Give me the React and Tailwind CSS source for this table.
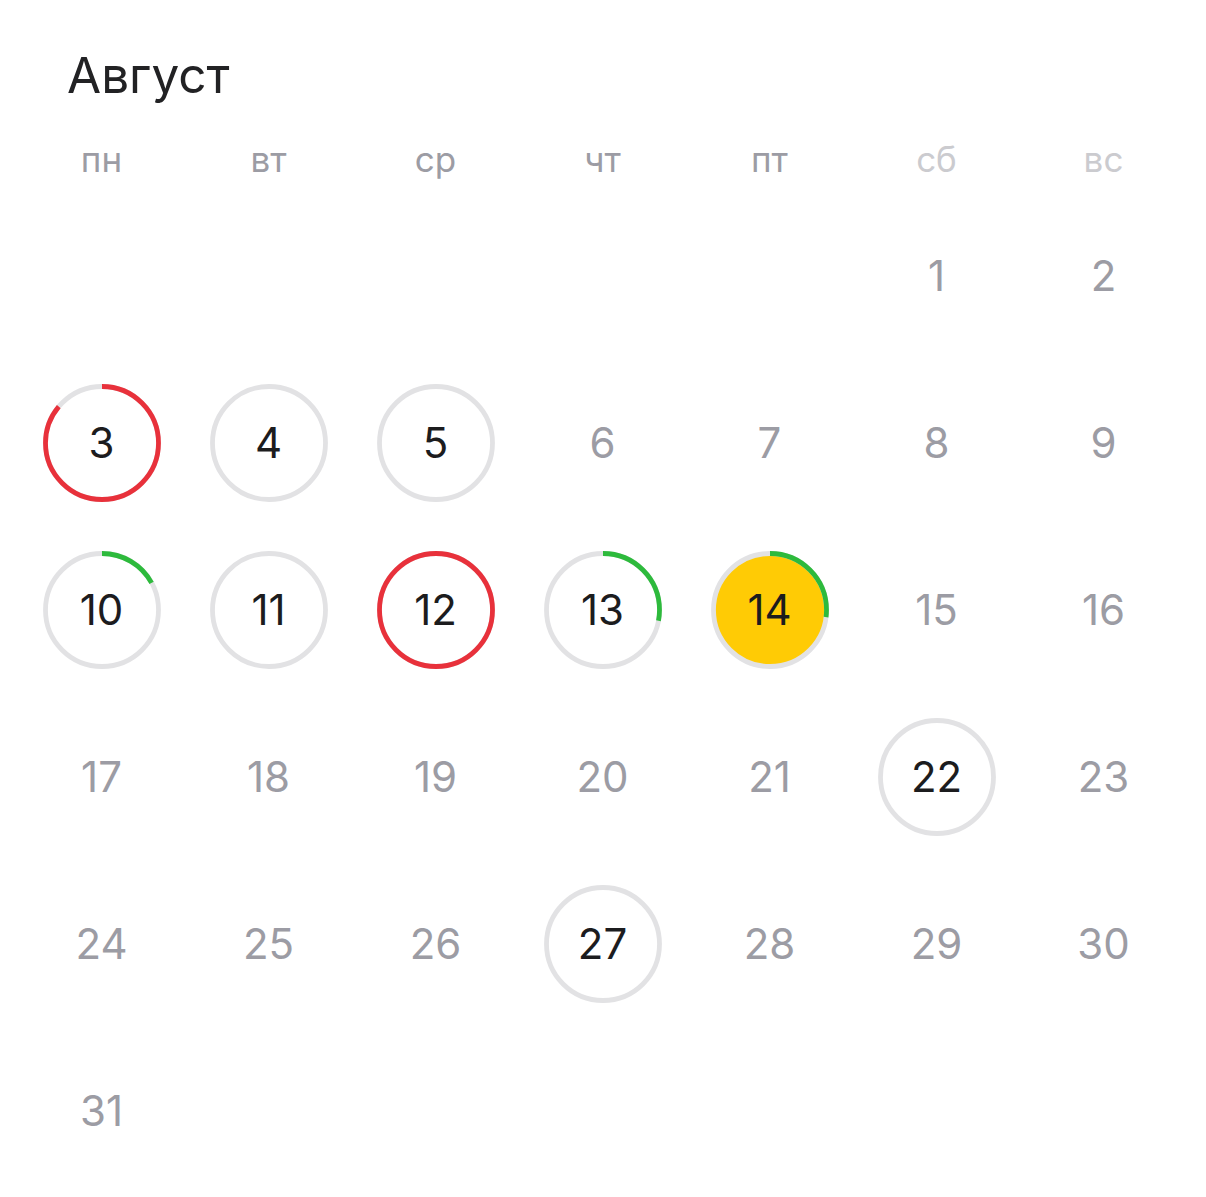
import React from "react";

const weekDays = [
  { label: "пн", weekend: false },
  { label: "вт", weekend: false },
  { label: "ср", weekend: false },
  { label: "чт", weekend: false },
  { label: "пт", weekend: false },
  { label: "сб", weekend: true },
  { label: "вс", weekend: true },
];

// progress = part of the ring that is coloured, starting at 12 o'clock
const marked = {
  3: { progress: 0.86, color: "#E8313B" },
  4: { progress: 0 },
  5: { progress: 0 },
  10: { progress: 0.17, color: "#2DBA3C" },
  11: { progress: 0 },
  12: { progress: 1, color: "#E8313B" },
  13: { progress: 0.28, color: "#2DBA3C" },
  14: { progress: 0.27, color: "#2DBA3C", fill: "#FFCB05" },
  22: { progress: 0 },
  27: { progress: 0 },
};

function Ring({ progress, color, fill }) {
  const r = 56.5;
  const c = 2 * Math.PI * r;
  return (
    <svg width="122" height="122" viewBox="0 0 122 122" className="absolute inset-0">
      {fill && <circle cx="61" cy="61" r={r} fill={fill} />}
      <circle cx="61" cy="61" r={r} fill="none" stroke="#E2E2E4" strokeWidth="4.8" />
      {progress > 0 && (
        <circle
          cx="61"
          cy="61"
          r={r}
          fill="none"
          stroke={color}
          strokeWidth="4.8"
          strokeDasharray={`${c * progress} ${c}`}
          transform="rotate(-90 61 61)"
        />
      )}
    </svg>
  );
}

function DayCell({ day }) {
  if (!day) return <div className="h-[167px]" />;
  const m = marked[day];
  return (
    <div className="h-[167px] flex items-center justify-center">
      {m ? (
        <div className="relative w-[122px] h-[122px] flex items-center justify-center">
          <Ring {...m} />
          <span className="relative text-[42px] text-[#1c1c1e] leading-none">{day}</span>
        </div>
      ) : (
        <span className="text-[42px] text-[#9c9ca4] leading-none">{day}</span>
      )}
    </div>
  );
}

export default function App() {
  // 1 August falls on Saturday
  const cells = [null, null, null, null, null];
  for (let d = 1; d <= 31; d++) cells.push(d);

  return (
    <div className="w-[1206px] min-h-[1197px] bg-white px-[18px] pt-[46px] font-['Inter','Roboto',sans-serif]">
      <h1 className="pl-[49px] h-[58px] leading-[58px] text-[49.5px] text-[#222224] font-normal">Август</h1>
      <div className="mt-[22px] grid grid-cols-7 w-[1169px]">
        {weekDays.map((w) => (
          <div
            key={w.label}
            className={`h-[66px] flex items-center justify-center text-[35px] ${
              w.weekend ? "text-[#cbcbcf]" : "text-[#9c9ca4]"
            }`}
          >
            {w.label}
          </div>
        ))}
        {cells.map((d, i) => (
          <DayCell key={i} day={d} />
        ))}
      </div>
    </div>
  );
}
